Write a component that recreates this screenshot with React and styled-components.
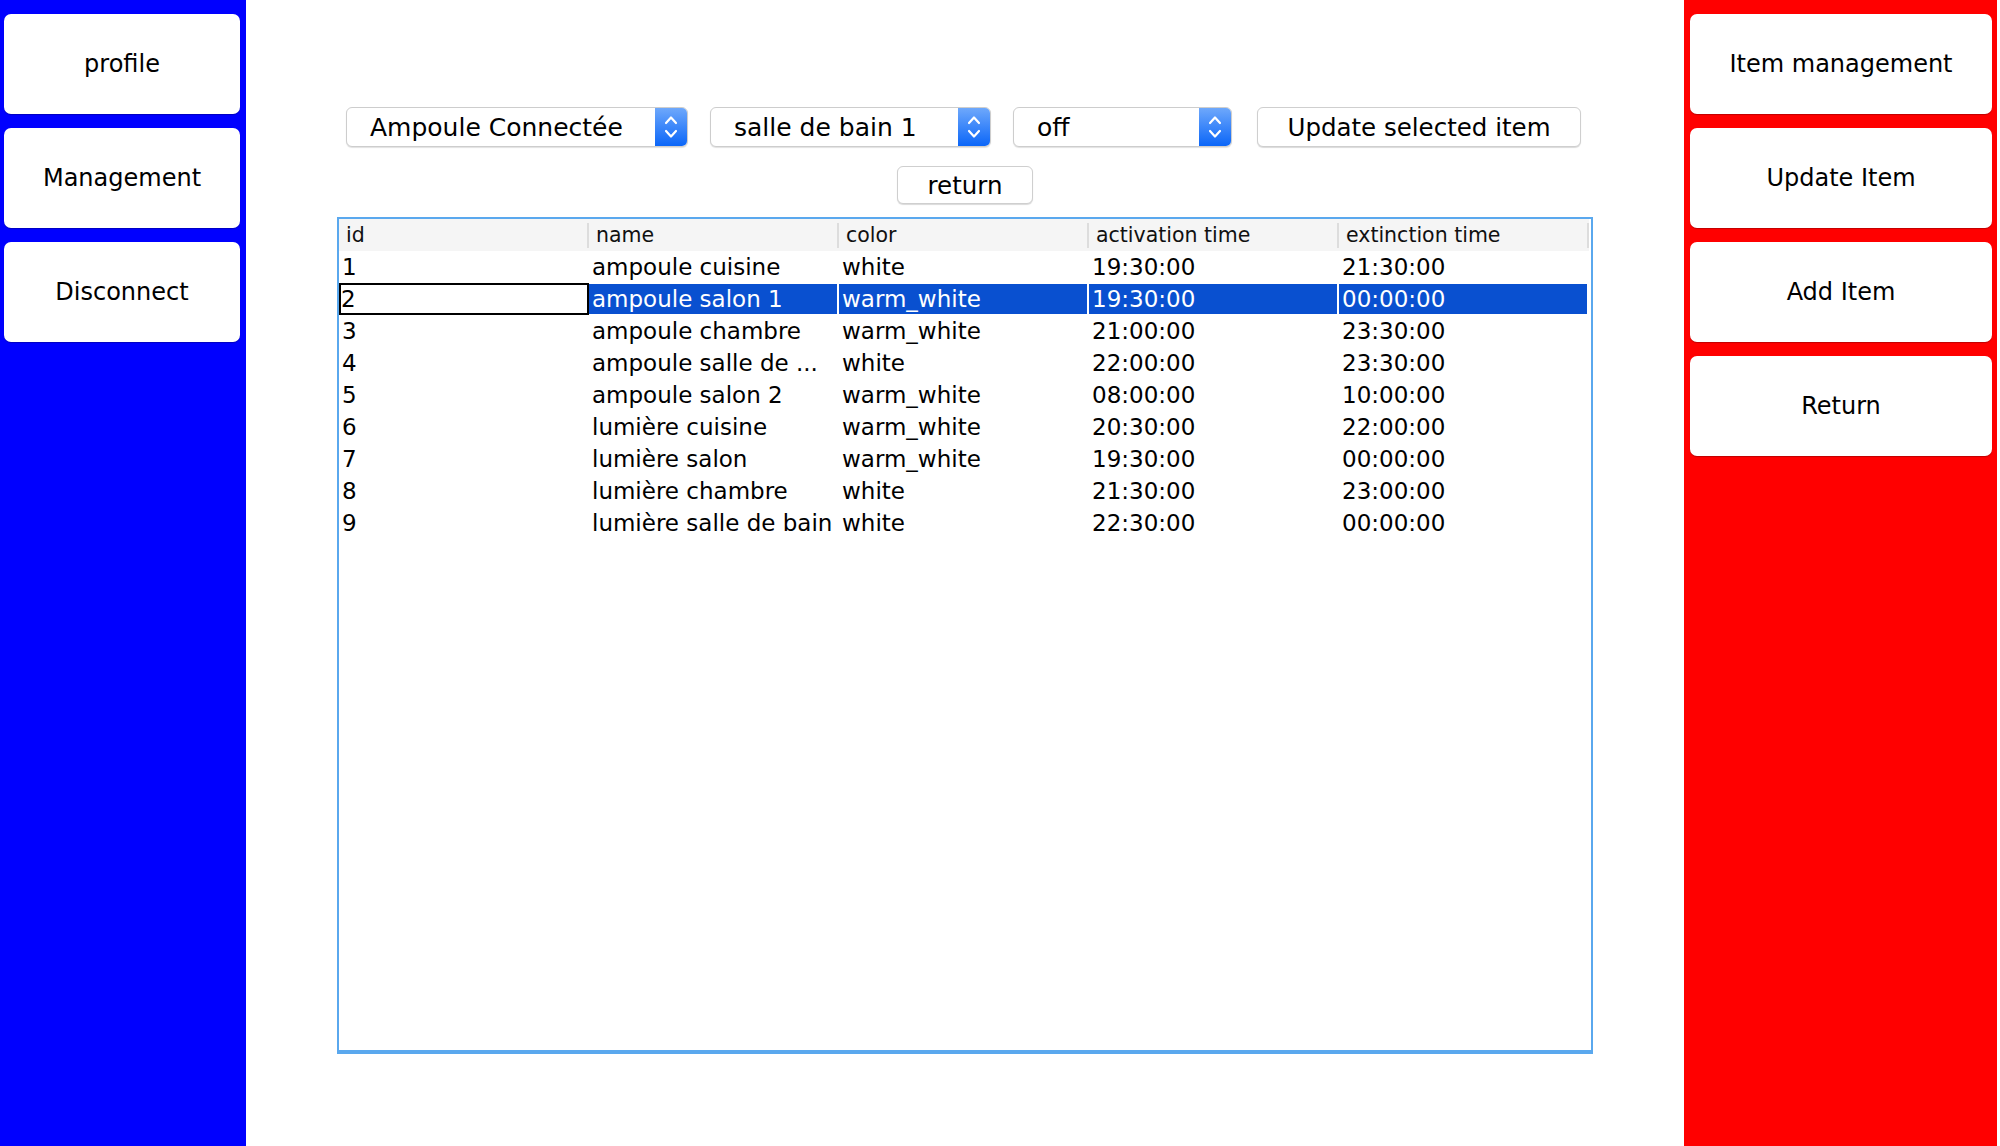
import React from 'react'
import styled, { createGlobalStyle } from 'styled-components'

const GlobalStyle = createGlobalStyle`
  html, body {
    margin: 0;
    padding: 0;
    background: #fff;
    font-family: "DejaVu Sans", "Liberation Sans", sans-serif;
  }
  * {
    box-sizing: border-box;
  }
`

const Page = styled.div`
  display: flex;
  width: 2000px;
  height: 1146px;
  overflow: hidden;
  background: #fff;
`

const Sidebar = styled.nav`
  display: flex;
  flex-direction: column;
  gap: 14px;
  flex-shrink: 0;
  width: ${p => p.width}px;
  padding: ${p => p.pad};
  background: ${p => p.color};
`

const SideButton = styled.button`
  height: 100px;
  border: none;
  border-radius: 7px;
  background: #fff;
  box-shadow: 0 1px 1px rgba(0, 0, 0, 0.25);
  font-family: "DejaVu Sans", sans-serif;
  font-size: 24px;
  color: #000;
  cursor: pointer;
`

const EdgeStrip = styled.div`
  width: 3px;
  flex-shrink: 0;
  background: #fff;
`

const Center = styled.main`
  flex: 1;
  display: flex;
  flex-direction: column;
  align-items: center;
  padding-top: 107px;
`

const Toolbar = styled.div`
  display: flex;
  gap: 22px;
  height: 40px;
  margin-left: -3px;
`

const Select = styled.div`
  display: flex;
  width: ${p => p.width}px;
  height: 40px;
  border: 1px solid #cdcdcd;
  border-radius: 6px;
  background: #fff;
  box-shadow: 0 1px 1px rgba(0, 0, 0, 0.12);
  overflow: hidden;
`

const SelectLabel = styled.div`
  flex: 1;
  display: flex;
  align-items: center;
  padding-left: 23px;
  font-size: 25px;
  color: #000;
  white-space: nowrap;
`

const SelectArrow = styled.div`
  width: 32px;
  display: flex;
  align-items: center;
  justify-content: center;
  background: linear-gradient(#6ea8fb, #0b66f8);
`

const PushButton = styled.button`
  width: ${p => p.width}px;
  height: ${p => p.height}px;
  margin-left: ${p => p.shift || 0}px;
  margin-top: ${p => p.top || 0}px;
  border: 1px solid #cfcfcf;
  border-radius: 6px;
  background: #fff;
  box-shadow: 0 1px 1px rgba(0, 0, 0, 0.15);
  font-family: "DejaVu Sans", sans-serif;
  font-size: 24.5px;
  color: #000;
  padding: 0;
`

const TableBox = styled.div`
  width: 1256px;
  height: 837px;
  margin-top: 13px;
  border: 2px solid #5aa8ee;
  border-bottom-width: 4px;
  background: #fff;
`

const Row = styled.div`
  display: grid;
  grid-template-columns: repeat(5, 250px);
  height: 32px;
  background: ${p => (p.header ? '#f5f5f5' : '#fff')};
  width: ${p => (p.header ? '1250px' : 'auto')};
`

const HeadCell = styled.div`
  position: relative;
  display: flex;
  align-items: center;
  padding-left: 7px;
  font-size: 20.5px;
  color: #111;

  &::after {
    content: '';
    position: absolute;
    right: 0;
    top: 4px;
    bottom: 3px;
    width: 2px;
    background: #dddddd;
  }
`

const Cell = styled.div`
  display: flex;
  align-items: center;
  padding-left: 3px;
  font-size: 23px;
  white-space: nowrap;
  overflow: hidden;
  color: ${p => (p.selected && !p.focus ? '#fff' : '#000')};
  background: ${p => (p.selected && !p.focus ? '#0950d0' : '#fff')};
  border-right: 2px solid #fff;
  border-top: 1px solid #fff;
  border-bottom: 1px solid #fff;
  ${p => p.focus && 'outline: 2px solid #000; outline-offset: -2px; padding-left: 2px;'}
`

const Chevrons = () => (
  <svg width="14" height="26" viewBox="0 0 14 26" fill="none">
    <polyline points="2,9 7,3.5 12,9" stroke="#fff" strokeWidth="2.2" strokeLinecap="round" strokeLinejoin="round" />
    <polyline points="2,17 7,22.5 12,17" stroke="#fff" strokeWidth="2.2" strokeLinecap="round" strokeLinejoin="round" />
  </svg>
)

const Combo = ({ width, value }) => (
  <Select width={width}>
    <SelectLabel>{value}</SelectLabel>
    <SelectArrow>
      <Chevrons />
    </SelectArrow>
  </Select>
)

const columns = ['id', 'name', 'color', 'activation time', 'extinction time']

const items = [
  ['1', 'ampoule cuisine', 'white', '19:30:00', '21:30:00'],
  ['2', 'ampoule salon 1', 'warm_white', '19:30:00', '00:00:00'],
  ['3', 'ampoule chambre', 'warm_white', '21:00:00', '23:30:00'],
  ['4', 'ampoule salle de ...', 'white', '22:00:00', '23:30:00'],
  ['5', 'ampoule salon 2', 'warm_white', '08:00:00', '10:00:00'],
  ['6', 'lumière cuisine', 'warm_white', '20:30:00', '22:00:00'],
  ['7', 'lumière salon', 'warm_white', '19:30:00', '00:00:00'],
  ['8', 'lumière chambre', 'white', '21:30:00', '23:00:00'],
  ['9', 'lumière salle de bain', 'white', '22:30:00', '00:00:00'],
]

const selectedRow = 1

export default function App() {
  return (
    <>
      <GlobalStyle />
      <Page>
        <Sidebar width={246} pad="14px 6px 0 4px" color="#0000ff">
          <SideButton>profile</SideButton>
          <SideButton>Management</SideButton>
          <SideButton>Disconnect</SideButton>
        </Sidebar>

        <Center>
          <Toolbar>
            <Combo width={342} value="Ampoule Connectée" />
            <Combo width={281} value="salle de bain 1" />
            <Combo width={219} value="off" />
            <PushButton width={324} height={40} shift={3}>
              Update selected item
            </PushButton>
          </Toolbar>
          <PushButton width={136} height={38} top={19}>
            return
          </PushButton>

          <TableBox>
            <Row header>
              {columns.map(c => (
                <HeadCell key={c}>{c}</HeadCell>
              ))}
            </Row>
            {items.map((item, i) => (
              <Row key={item[0]}>
                {item.map((v, j) => (
                  <Cell
                    key={j}
                    selected={i === selectedRow}
                    focus={i === selectedRow && j === 0}
                  >
                    {v}
                  </Cell>
                ))}
              </Row>
            ))}
          </TableBox>
        </Center>

        <Sidebar width={313} pad="14px 5px 0 6px" color="#ff0000">
          <SideButton>Item management</SideButton>
          <SideButton>Update Item</SideButton>
          <SideButton>Add Item</SideButton>
          <SideButton>Return</SideButton>
        </Sidebar>
        <EdgeStrip />
      </Page>
    </>
  )
}
